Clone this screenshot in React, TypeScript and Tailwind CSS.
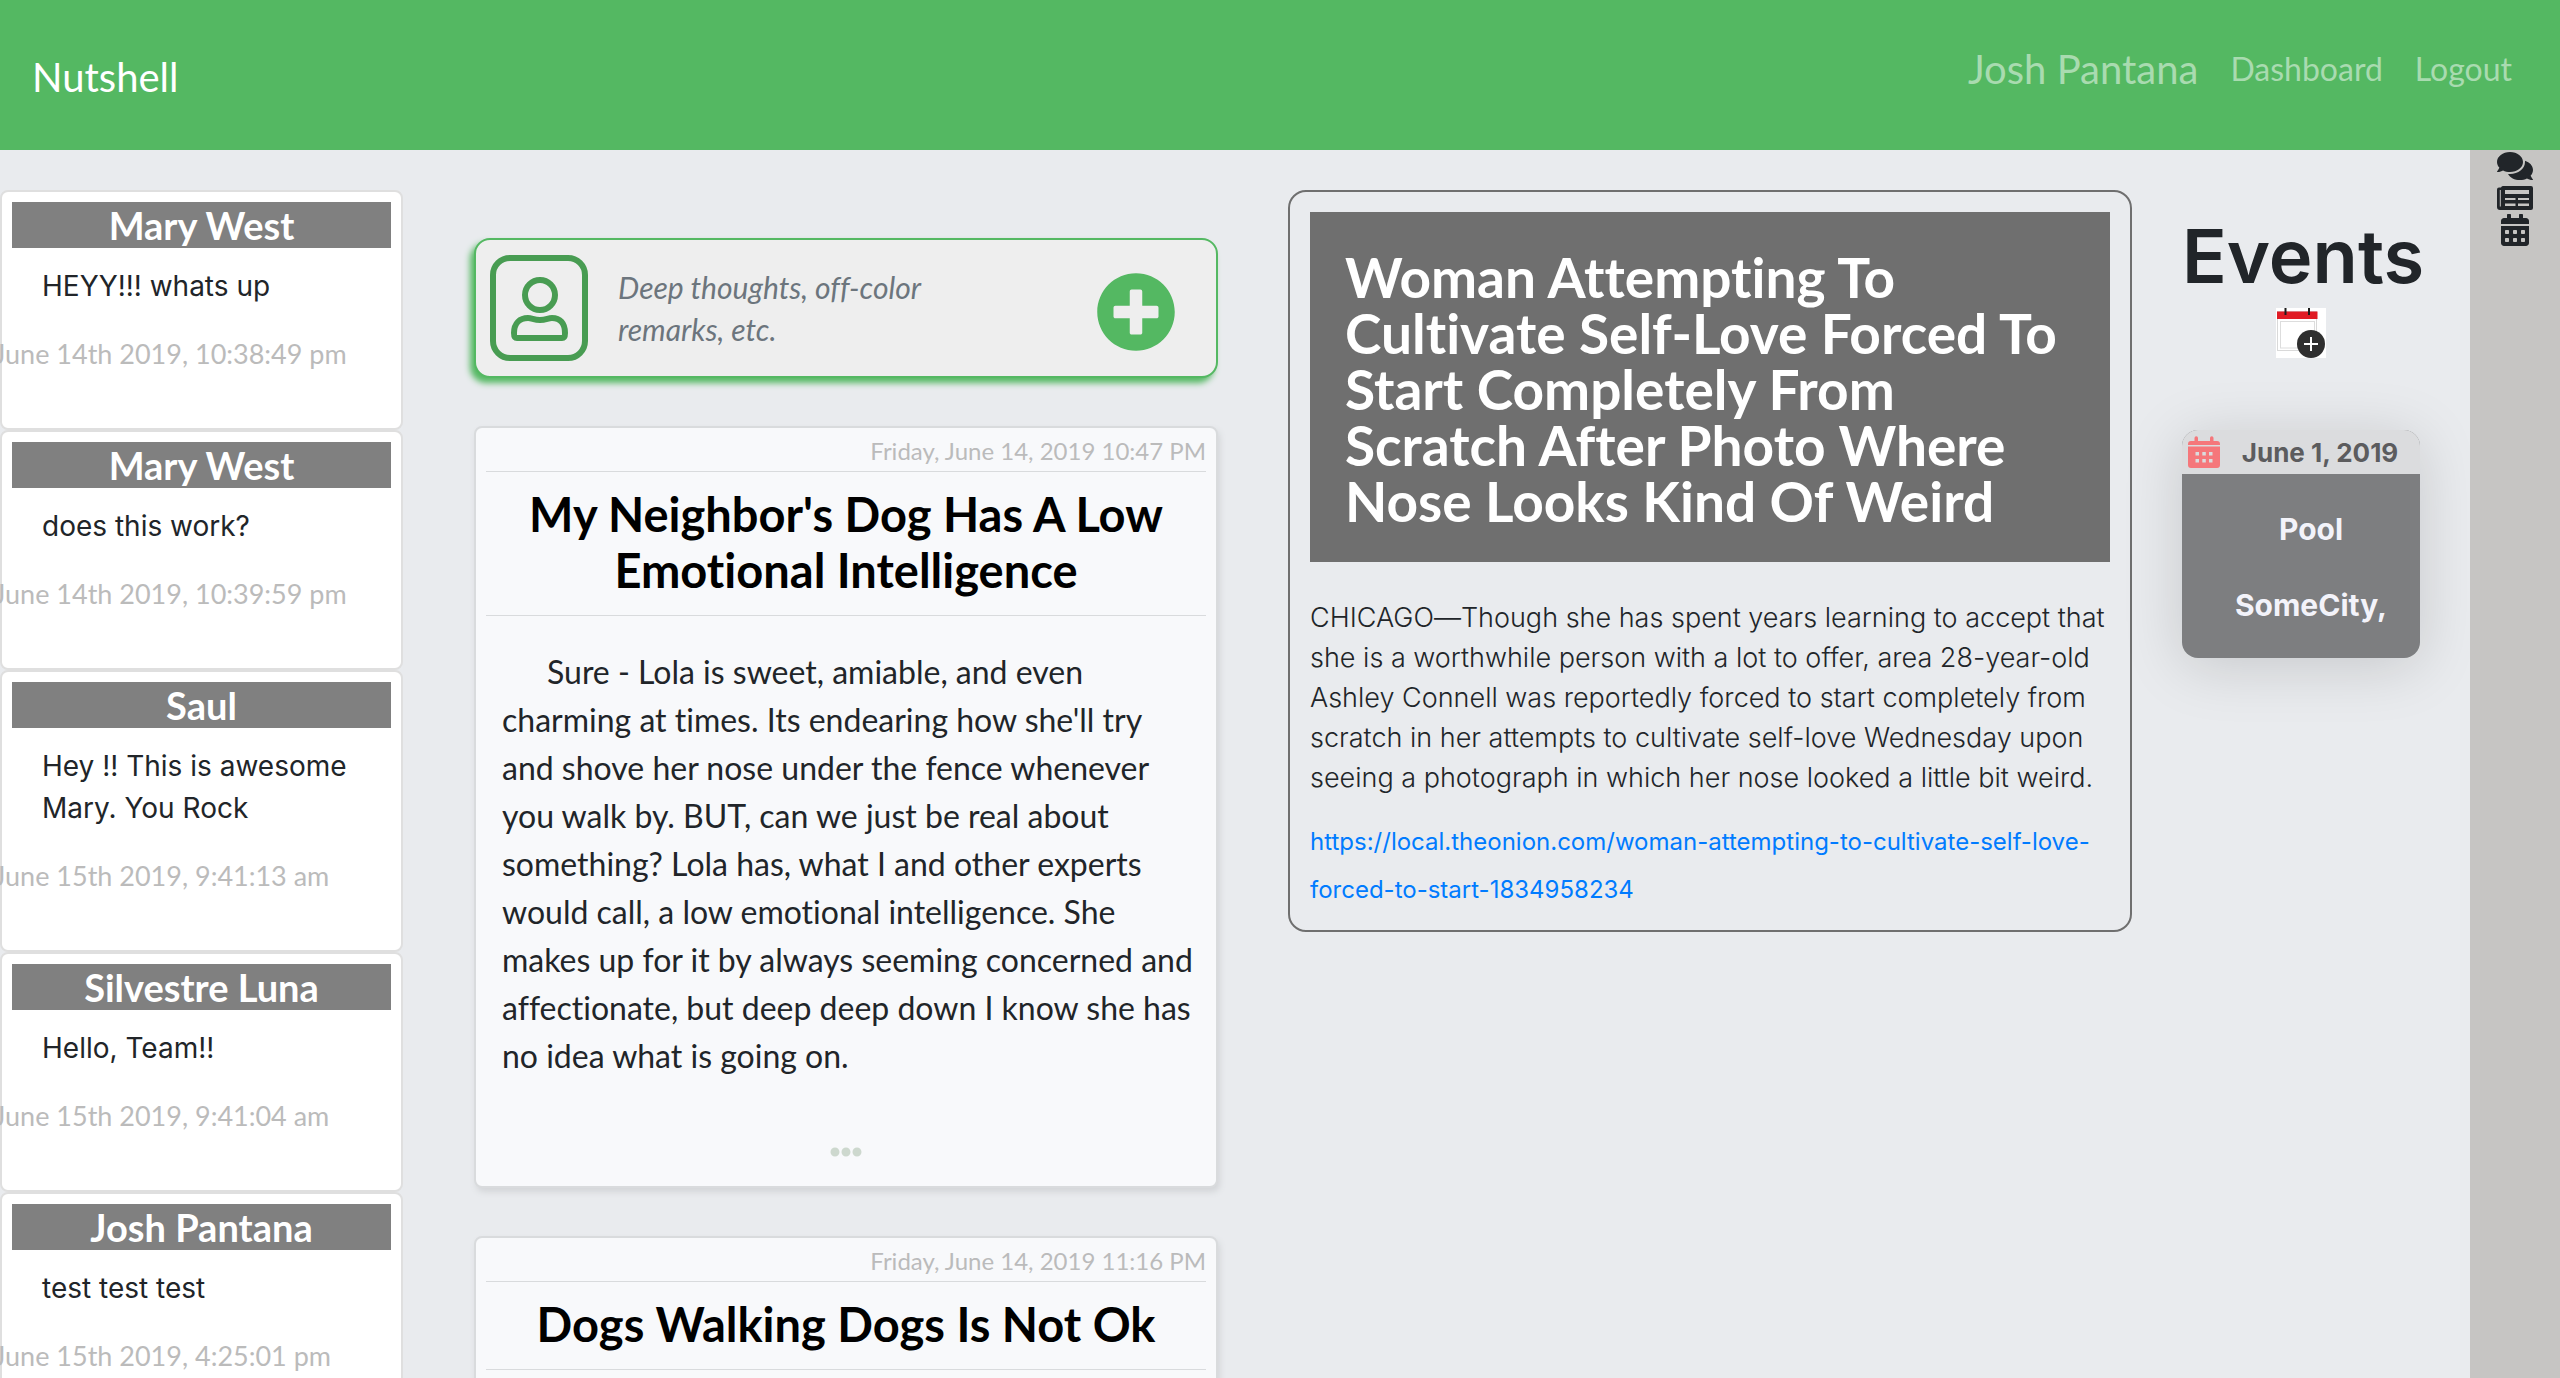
import React from "react";
import { FaCalendarAlt, FaComments, FaEllipsisH, FaPlusCircle } from "react-icons/fa";

type Message = { name: string; text: string; time: string };

const messages: Message[] = [
  { name: "Mary West", text: "HEYY!!! whats up", time: "June 14th 2019, 10:38:49 pm" },
  { name: "Mary West", text: "does this work?", time: "June 14th 2019, 10:39:59 pm" },
  { name: "Saul", text: "Hey !! This is awesome Mary. You Rock", time: "June 15th 2019, 9:41:13 am" },
  { name: "Silvestre Luna", text: "Hello, Team!!", time: "June 15th 2019, 9:41:04 am" },
  { name: "Josh Pantana", text: "test test test", time: "June 15th 2019, 4:25:01 pm" },
];

function Header() {
  return (
    <header className="flex h-[150px] shrink-0 items-center justify-between bg-[#54b862] px-8 font-[Lato,sans-serif]">
      <a href="#home" className="pt-1 text-[40px] leading-[60px] text-white">
        Nutshell
      </a>
      <nav className="flex items-center gap-8 pr-4 pb-3 text-[32px] leading-[48px] text-[#a9dbb0]">
        <a href="#profile" className="text-[40px]">Josh Pantana</a>
        <a href="#dashboard">Dashboard</a>
        <a href="#logout">Logout</a>
      </nav>
    </header>
  );
}

function MessageCard({ message }: { message: Message }) {
  return (
    <article className="rounded-lg border-2 border-[#dfdfdf] bg-white px-[10px] pt-[10px] pb-[53px]">
      <h2 className="bg-[#808080] text-center font-[Lato,sans-serif] text-[38px] leading-[46px] font-bold text-white">
        {message.name}
      </h2>
      <p className="px-[30px] pt-[17px] text-[28px] leading-[42px] text-[#212529]">{message.text}</p>
      <div className="mt-[26px] -ml-[18px] font-[Lato,sans-serif] text-[27px] leading-[42px] whitespace-nowrap text-[#bbbbbb]">
        <time>{message.time}</time>
      </div>
    </article>
  );
}

function UserBadge() {
  return (
    <svg viewBox="0 0 98 106" className="h-[106px] w-[98px] shrink-0" fill="none" stroke="#489c52" strokeWidth="6">
      <rect x="3" y="3" width="92" height="100" rx="17" />
      <circle cx="50" cy="40" r="15" />
      <path d="M27 83 C24 83 24 81 24 78 C24 68 30 63 38 63 C42 63 44 65 50 65 C56 65 58 63 62 63 C70 63 75 68 75 78 C75 81 75 83 72 83 Z" />
    </svg>
  );
}

function Composer() {
  return (
    <form className="mb-12 flex h-[140px] items-center rounded-[16px] border-2 border-[#54b862] bg-[#eeeeee] pl-[14px] pr-10 shadow-[-4px_5px_6px_#54b862]">
      <UserBadge />
      <textarea
        aria-label="New post"
        rows={2}
        placeholder="Deep thoughts, off-color remarks, etc."
        className="ml-[30px] w-[380px] resize-none overflow-hidden bg-transparent font-[Lato,sans-serif] text-[30px] leading-[42px] italic outline-none placeholder:text-[#6c757d] placeholder:opacity-100"
      />
      <button type="button" aria-label="Add post" className="mt-2 ml-auto text-[#54b862]">
        <FaPlusCircle className="size-20" />
      </button>
    </form>
  );
}

function PostCard({ date, title, children }: { date: string; title: string; children?: React.ReactNode }) {
  return (
    <article className="mb-12 flex min-h-[400px] flex-col rounded-lg border-2 border-[#d9dbdd] bg-[#f8f9fb] px-[10px] font-[Lato,sans-serif] shadow-[2px_4px_6px_#d3d5d8]">
      <div className="flex justify-end border-b border-[#d9dbdd] pt-[5px] pb-0.5 text-[24px] leading-[36px] text-[#bbbbbb]">
        <time>{date}</time>
      </div>
      <h2 className="border-b border-[#d9dbdd] px-4 pt-[14px] pb-[17px] text-center text-[47px] leading-[56px] font-bold text-black">{title}</h2>
      {children}
    </article>
  );
}

function NewsCard() {
  return (
    <article className="rounded-[18px] border-2 border-[#6f6f6f] px-5 pt-5 pb-4">
      <h2 className="bg-[#6f6f6f] pt-[37px] pr-[30px] pb-[33px] pl-[35px] font-[Lato,sans-serif] text-[55px] leading-[56px] font-bold text-white">
        Woman Attempting To Cultivate Self-Love Forced To Start Completely From Scratch After Photo Where Nose Looks Kind Of Weird
      </h2>
      <p className="-mr-2 pt-9 text-[27px] leading-[40px] font-light text-[#212529]">
        CHICAGO—Though she has spent years learning to accept that she is a worthwhile person with a lot to offer, area 28-year-old
        Ashley Connell was reportedly forced to start completely from scratch in her attempts to cultivate self-love Wednesday upon
        seeing a photograph in which her nose looked a little bit weird.
      </p>
      <p className="pt-5 text-[24px] leading-[48px]">
        <a href="https://local.theonion.com/woman-attempting-to-cultivate-self-love-forced-to-start-1834958234" className="text-[#007bff]">
          https://local.theonion.com/woman-attempting-to-cultivate-self-love-forced-to-start-1834958234
        </a>
      </p>
    </article>
  );
}

function AddEventIcon() {
  return (
    <svg viewBox="0 0 50 50" className="size-[50px]" fill="none">
      <rect width="50" height="50" fill="#fff" />
      <rect x="1.5" y="3.5" width="39" height="39" stroke="#d9d9d9" />
      <rect x="4.5" y="13.5" width="34" height="26.5" stroke="#dddddd" />
      <rect x="1" y="3.5" width="40.5" height="7.5" fill="#e01b24" />
      <path d="M9.500 0V7M33 0V7" stroke="#1c1c1c" strokeWidth="2" />
      <circle cx="35" cy="36" r="14" fill="#2f2f2f" />
      <path d="M28 36H42M35 29V43" stroke="#fff" strokeWidth="2" />
    </svg>
  );
}

function EventCalendarIcon() {
  return (
    <svg viewBox="0 0 32 32" className="size-8 text-[#f5777b]" fill="currentColor">
      <path d="M0 9V8a3 3 0 0 1 3-3h3.500V2a1.750 1.750 0 0 1 3.500 0v3h12V2a1.750 1.750 0 0 1 3.500 0v3H29a3 3 0 0 1 3 3v1Z" />
      <path
        fillRule="evenodd"
        d="M0 10.500h32V29a3 3 0 0 1-3 3H3a3 3 0 0 1-3-3ZM7.500 16v3.500H11V16ZM14.300 16v3.500h3.500V16ZM21 16v3.500h3.500V16ZM7.500 23v3.500H11V23ZM14.300 23v3.500h3.500V23ZM21 23v3.500h3.500V23Z"
      />
    </svg>
  );
}

function NewspaperIcon() {
  return (
    <svg viewBox="0 0 36 32" className="h-8 w-9" fill="currentColor">
      <path
        fillRule="evenodd"
        d="M6 4H34a2 2 0 0 1 2 2V26a2 2 0 0 1-2 2H3a3 3 0 0 1-3-3V7.500A2 2 0 0 1 2 5.500H4A2 2 0 0 1 6 4ZM2.800 8V24.500H3.800V8ZM8 8V12H32V8ZM8 16V18H18.500V16ZM21 16V18H32V16ZM8 21.500V24H18.500V21.500ZM21 21.500V24H32V21.500Z"
      />
    </svg>
  );
}

function Events() {
  return (
    <section className="flex flex-col pt-[66px] pr-[50px]">
      <h1 className="text-center text-[74px] leading-[80px] font-semibold text-[#212529]">Events</h1>
      <button type="button" aria-label="Add event" className="mt-3 self-center">
        <AddEventIcon />
      </button>
      <article className="mt-[72px] overflow-hidden rounded-[16px] bg-[#7d7e80] font-bold shadow-[0_8px_60px_rgba(0,0,0,0.15)]">
        <div className="flex h-[44px] items-center bg-[#dbdcde] pl-[6px]">
          <EventCalendarIcon />
          <time className="flex-1 text-center text-[26px] text-[#5c5c5e]">June 1, 2019</time>
        </div>
        <div className="pt-[33px] pb-[31px] pl-[20px] text-center text-[30px] leading-[44px] text-[#f3f3fa]">
          <p>Pool</p>
          <p className="pt-8">SomeCity,</p>
        </div>
      </article>
    </section>
  );
}

function Rail() {
  return (
    <aside className="flex w-[90px] shrink-0 flex-col items-center bg-[#c6c5c3] text-[#212529]">
      <button type="button" aria-label="Messages"><FaComments className="h-8 w-9" /></button>
      <button type="button" aria-label="News"><NewspaperIcon /></button>
      <button type="button" aria-label="Events"><FaCalendarAlt className="size-8" /></button>
    </aside>
  );
}

export default function App() {
  return (
    <div className="flex h-screen flex-col overflow-hidden bg-[#e9ebee] font-[Inter,sans-serif] [font-variant-ligatures:none]">
      <Header />
      <div className="flex min-h-0 flex-1">
        <main className="grid min-w-0 flex-1 grid-cols-[minmax(0,403fr)_minmax(0,885fr)_minmax(0,894fr)_minmax(0,288fr)] items-start">
          <section aria-label="Messages" className="pt-10">
            {messages.map((m) => (
              <MessageCard key={m.time} message={m} />
            ))}
          </section>
          <section aria-label="Posts" className="pt-[88px] pr-[70px] pl-[71px]">
            <Composer />
            <PostCard date="Friday, June 14, 2019 10:47 PM" title="My Neighbor's Dog Has A Low Emotional Intelligence">
              <p className="pt-8 pr-2 pl-4 indent-[45px] text-[32px] leading-[48px] text-[#212529]">
                Sure - Lola is sweet, amiable, and even charming at times. Its endearing how she'll try and shove her nose under the
                fence whenever you walk by. BUT, can we just be real about something? Lola has, what I and other experts would call,
                a low emotional intelligence. She makes up for it by always seeming concerned and affectionate, but deep deep down I
                know she has no idea what is going on.
              </p>
              <button type="button" aria-label="More" className="mt-14 mb-[18px] self-center text-[#cdd8ce]">
                <FaEllipsisH className="size-8" />
              </button>
            </PostCard>
            <PostCard date="Friday, June 14, 2019 11:16 PM" title="Dogs Walking Dogs Is Not Ok" />
          </section>
          <section aria-label="News" className="pt-10 pr-[50px]">
            <NewsCard />
          </section>
          <Events />
        </main>
        <Rail />
      </div>
    </div>
  );
}
